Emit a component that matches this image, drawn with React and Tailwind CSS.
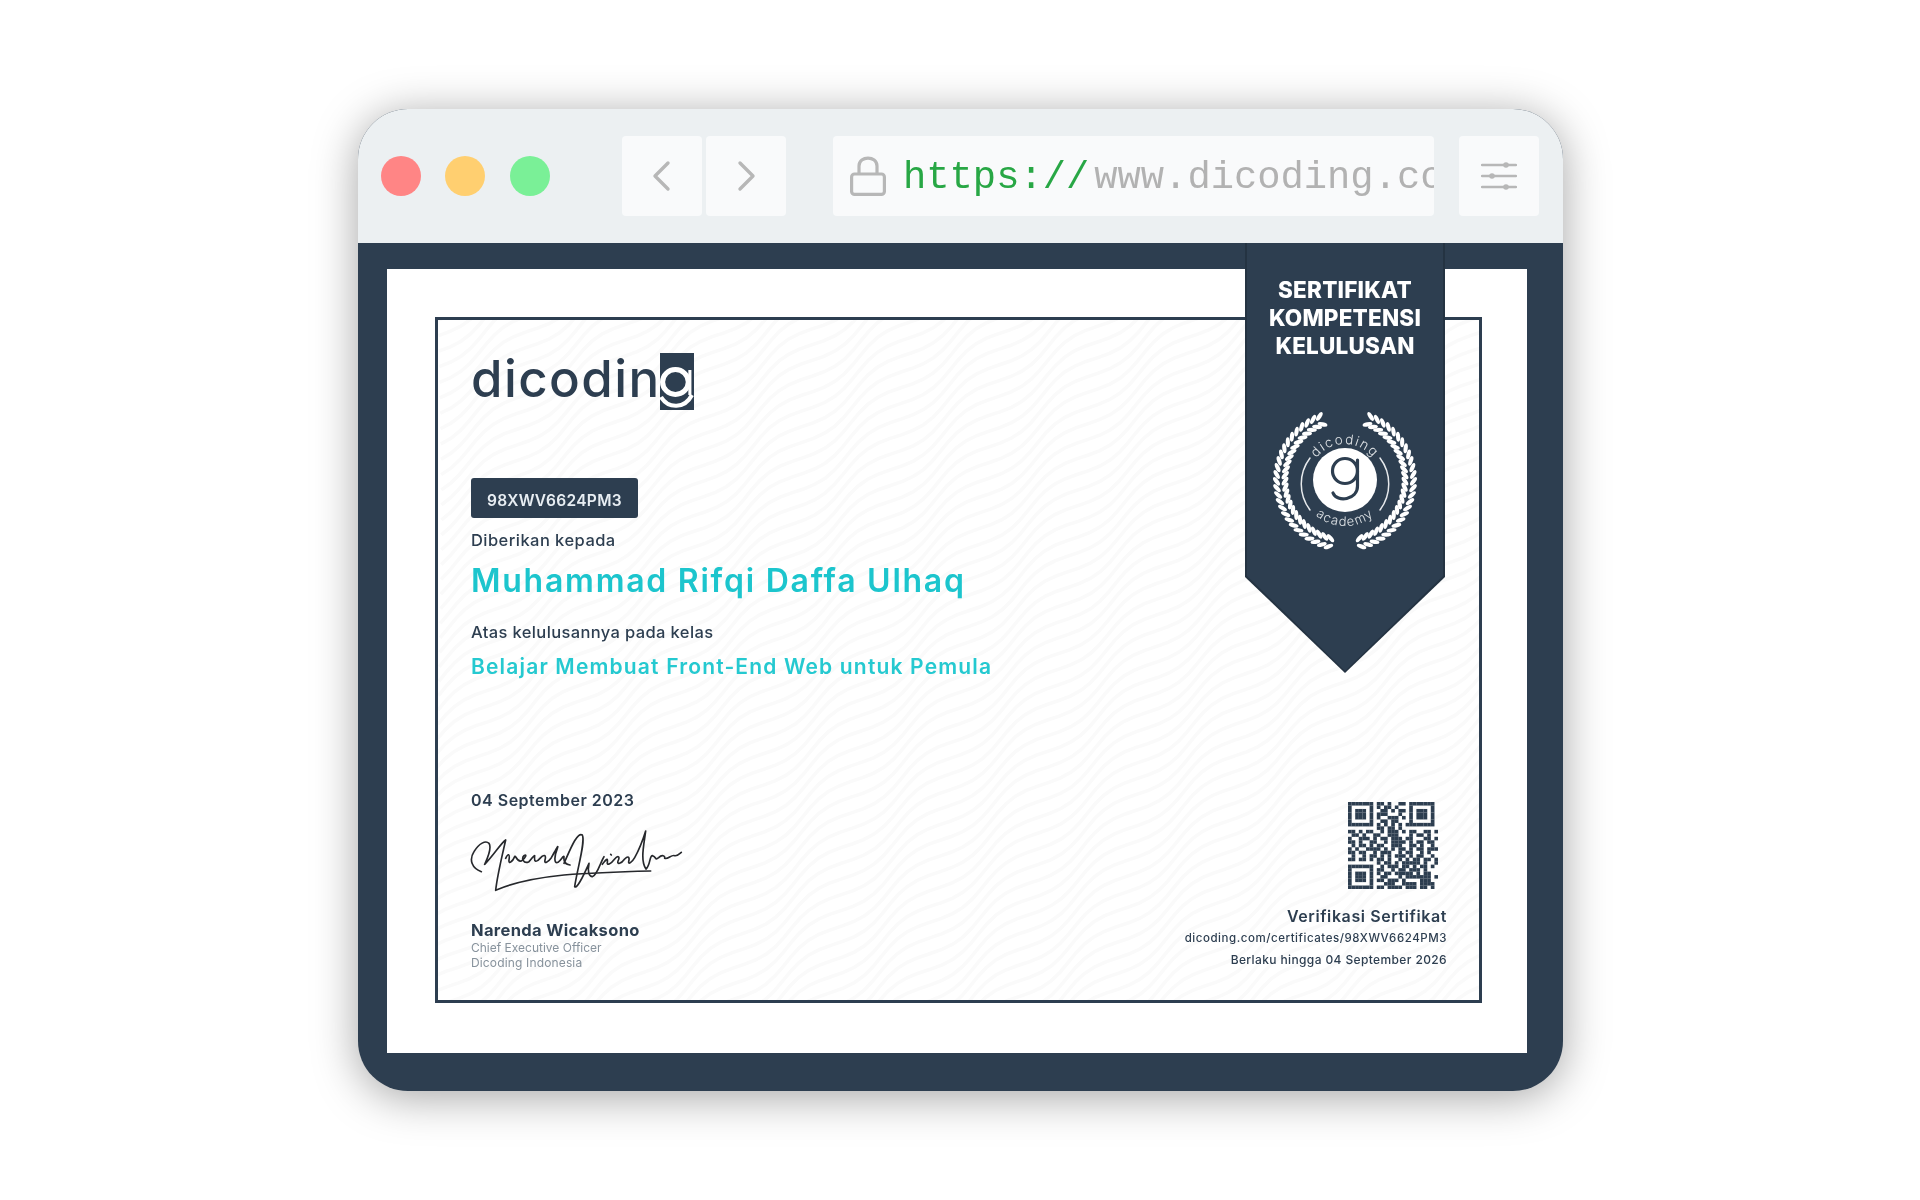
import React from "react";

const DARK = "#2d3e50";

const qrRows = [
  "XXXXXXX.XX.X..XX.XXXXXXX.",
  "X.....X.X.XX.X...X.....X.",
  "X.XXX.X..XX.X.XX.X.XXX.X.",
  "X.XXX.X.XXX...X..X.XXX.X.",
  "X.XXX.X.X..XXX.X.X.XXX.X.",
  "X.....X..XX.XX...X.....X.",
  "XXXXXXX.X.X.X.X.XXXXXXXX.",
  "........XX.XX.X..........",
  "XX.X.XX..X.XXX.X.XX..XX.X",
  ".XX.X..XX..XXX...X.XX.X..",
  "X..XXX.X.XX.XXX.XX...XX.X",
  "XX.X..XX..X.XXXX.X.XX.XX.",
  ".X.XX.X.XX..XXX..XX.X..X.",
  "X.X..XXXX.X.X.XX.X.XX.XXX",
  "XX.XX..X.XXX..X.XX..X.X..",
  ".X..X.XX.X.X.XXX.X.XX..X.",
  "XX.XX.X.XX.X..X.X.XX.XX.X",
  "........X.XX.X.XXXXX.X..X",
  "XXXXXXX..X.XXX.XX.X.XX.X.",
  "X.....X.XX..X.XX.XXX.X...",
  "X.XXX.X.X.XX.XXXXX.X.XX..",
  "X.XXX.X..XX...X.XXXXXXX.X",
  "X.XXX.X.XX.XXX.X....XXX..",
  "X.....X...XXX..XXXX.XXXX.",
  "XXXXXXX.XX.XXXX.XXX.XX.X.",
];

function Qr() {
  return (
    <svg width="90" height="87" viewBox="0 0 25 25" preserveAspectRatio="none" className="block">
      {qrRows.map((row, y) =>
        row.split("").map((c, x) =>
          c === "X" ? <rect key={x + "-" + y} x={x} y={y} width="1.02" height="1.02" fill={DARK} /> : null
        )
      )}
    </svg>
  );
}

function wavePaths() {
  const out = [];
  const dx = 0.82;
  const dy = -0.57;
  for (let k = -30; k < 120; k++) {
    const oy = k * 15;
    let d = "";
    for (let t = 0; t <= 1400; t += 12) {
      const w = 6 * Math.sin(t / 20 + k * 0.12);
      const x = dx * t + 0.57 * w;
      const y = oy + dy * t + 0.82 * w;
      d += (t === 0 ? "M" : "L") + x.toFixed(1) + " " + y.toFixed(1) + " ";
    }
    out.push(d);
  }
  return out;
}

function Pattern() {
  return (
    <svg className="absolute inset-0 w-full h-full" viewBox="0 0 1041 680" preserveAspectRatio="none">
      {wavePaths().map((d, i) => (
        <path key={i} d={d} fill="none" stroke="#fafafa" strokeWidth="3.5" />
      ))}
    </svg>
  );
}

function Signature() {
  return (
    <svg width="225" height="75" viewBox="0 0 675 225" className="block -ml-[7px] -mt-[5px] -mb-[8px]">
      <g fill="none" stroke="#26282c" strokeWidth="5" strokeLinecap="round" strokeLinejoin="round">
        <path d="M52 140 C24 130 14 105 30 80 C45 55 65 45 75 55 C85 70 68 105 62 118 C90 90 110 55 125 45 C115 90 100 150 95 196 C130 180 200 160 300 150 C400 142 480 140 560 138" />
        <path d="M125 100 C132 85 138 85 135 105 C133 118 145 112 152 95 C155 88 158 112 172 108 C185 100 190 85 180 92 C172 100 178 118 195 110 C205 100 208 92 212 92 C210 110 215 115 228 100 C238 88 248 88 243 105 C240 118 252 112 262 98 C275 75 285 55 280 70 C272 90 268 118 282 112 C292 105 298 90 300 95 C298 110 305 118 318 120" />
        <path d="M300 115 C320 70 340 20 355 30 C365 50 340 130 332 185 C338 192 355 160 375 115 C370 140 375 155 385 155 C400 150 410 110 420 95" />
        <path d="M415 118 C425 105 432 95 430 112 C428 122 440 118 452 102 C460 92 470 92 462 108 C458 120 472 116 482 102 C492 92 498 95 494 110 C492 120 504 112 512 98 C525 75 535 50 545 18 C540 60 528 105 546 132 C560 120 556 90 566 92 C578 96 572 108 584 98 C594 88 604 92 602 100 C612 104 622 88 632 92 C640 94 645 88 652 82" />
        <path d="M440 88 L442 90" />
      </g>
    </svg>
  );
}

function LaurelSide({ mirror }) {
  const leaves = [];
  const n = 26;
  for (let i = 0; i < n; i++) {
    const phi = ((22 + (i * (166 - 22)) / (n - 1)) * Math.PI) / 180;
    [60, 68.5].forEach((r, j) => {
      const x = 80 - r * Math.sin(phi);
      const y = 72 - r * Math.cos(phi);
      const tangent = (-phi * 180) / Math.PI;
      const rot = tangent + (j === 0 ? 35 : -35) + 180;
      leaves.push(
        <ellipse key={i + "-" + j} cx={x} cy={y} rx="5" ry="2.1" fill="#fff" transform={`rotate(${rot} ${x} ${y})`} />
      );
    });
  }
  return <g transform={mirror ? "translate(160 0) scale(-1 1)" : undefined}>{leaves}</g>;
}

function Badge() {
  return (
    <svg width="160" height="150" viewBox="0 0 160 150" className="block">
      <defs>
        <path id="arcTop" d="M44 72 A36 36 0 0 1 116 72" />
        <path id="arcBottom" d="M34 72 A46 46 0 0 0 126 72" />
      </defs>
      <LaurelSide />
      <LaurelSide mirror />
      <path d="M45 50 A43 43 0 0 0 45 102" fill="none" stroke="#e6e9ec" strokeWidth="1.5" strokeLinecap="round" />
      <path d="M115 50 A43 43 0 0 1 115 102" fill="none" stroke="#e6e9ec" strokeWidth="1.5" strokeLinecap="round" />
      <circle cx="80" cy="72" r="32" fill="#fff" />
      <circle cx="80" cy="63" r="12.5" fill="none" stroke={DARK} strokeWidth="3.2" />
      <path d="M92.5 52 V78 C92.5 92 72 95 68 85" fill="none" stroke={DARK} strokeWidth="3.2" strokeLinecap="round" />
      <text fontFamily="Inter, sans-serif" fontSize="13.5" fontWeight="300" fill="#dfe3e6" letterSpacing="1.5">
        <textPath href="#arcTop" startOffset="50%" textAnchor="middle">dicoding</textPath>
      </text>
      <text fontFamily="Inter, sans-serif" fontSize="13" fontWeight="300" fill="#dfe3e6" letterSpacing="1.2">
        <textPath href="#arcBottom" startOffset="50%" textAnchor="middle">academy</textPath>
      </text>
    </svg>
  );
}

function Logo() {
  return (
    <div className="flex h-[57px] items-start">
      <span className="font-['Inter',sans-serif] text-[51px] leading-[52px] font-medium tracking-[1.4px] text-[#2d3e50]">dicodin</span>
      <svg width="34" height="57" viewBox="0 0 33 57" preserveAspectRatio="none" className="block shrink-0">
        <rect width="33" height="57" fill={DARK} />
        <circle cx="15" cy="29" r="12.5" fill={DARK} stroke="#fff" strokeWidth="5" />
        <path d="M29 17 V42" stroke="#fff" strokeWidth="3" />
        <path d="M1 44 C8 56 24 56 31 42" fill="none" stroke="#fff" strokeWidth="4" />
      </svg>
    </div>
  );
}

function Chevron({ dir }) {
  return (
    <svg width="22" height="32" viewBox="0 0 22 32" fill="none" stroke="#b7b7b7" strokeWidth="3.4" strokeLinecap="round" strokeLinejoin="round">
      {dir === "left" ? <path d="M17 3 L4 16 L17 29" /> : <path d="M5 3 L18 16 L5 29" />}
    </svg>
  );
}

function Lock() {
  return (
    <svg width="36" height="40" viewBox="0 0 36 40" fill="none" stroke="#b7b7b7" strokeWidth="3.2" className="shrink-0">
      <rect x="1.6" y="18" width="32.8" height="20.4" rx="3" />
      <path d="M9 18 V10 C9 -0.5 27 -0.5 27 10 V18" />
    </svg>
  );
}

function Sliders() {
  return (
    <svg width="36" height="30" viewBox="0 0 36 30" fill="none" stroke="#b7b7b7" strokeWidth="2.4" strokeLinecap="round">
      <path d="M1 4 H35 M1 15 H35 M1 26 H35" />
      <circle cx="25" cy="4" r="2.8" fill="#b7b7b7" stroke="none" />
      <circle cx="11" cy="15" r="2.8" fill="#b7b7b7" stroke="none" />
      <circle cx="25" cy="26" r="2.8" fill="#b7b7b7" stroke="none" />
    </svg>
  );
}

function Toolbar() {
  return (
    <div className="h-[134px] bg-[#ecf0f2] flex items-center pl-[23.5px] shrink-0">
      <div className="flex items-center blur-[0.4px]">
        <span className="w-10 h-10 rounded-full bg-[#ff8585]" />
        <span className="w-10 h-10 rounded-full bg-[#ffcf70] ml-6" />
        <span className="w-10 h-10 rounded-full bg-[#7af097] ml-[25px]" />
        <span className="w-20 h-20 rounded bg-[#f9fafb] ml-[72px] flex items-center justify-center"><Chevron dir="left" /></span>
        <span className="w-20 h-20 rounded bg-[#f9fafb] ml-1 flex items-center justify-center"><Chevron dir="right" /></span>
        <div className="w-[601px] h-20 rounded bg-[#f9fafb] ml-[47px] flex items-center pl-[17px] overflow-hidden">
          <Lock />
          <span className="ml-[17px] pt-[5px] font-['Liberation_Mono',monospace] text-[38.8px] leading-none whitespace-nowrap text-[#28a745]">https://</span>
          <span className="ml-[5px] pt-[5px] font-['Liberation_Mono',monospace] text-[38.8px] leading-none whitespace-nowrap text-[#b2b2b2]">www.dicoding.com/certificates/98XWV6624PM3</span>
        </div>
        <span className="w-20 h-20 rounded bg-[#f9fafb] ml-[25px] flex items-center justify-center"><Sliders /></span>
      </div>
    </div>
  );
}

function Ribbon() {
  return (
    <div className="absolute left-[858px] -top-[26px] w-[200px] h-[430px] bg-[#243342] [clip-path:polygon(0_0,100%_0,100%_334px,50%_430px,0_334px)]">
      <div className="mx-[2px] h-[428px] bg-[#2d3e50] [clip-path:polygon(0_0,100%_0,100%_333px,50%_428px,0_333px)] flex flex-col items-center pt-[33px]">
        <div className="font-['Inter',sans-serif] text-[22.5px] leading-[28px] font-extrabold text-white text-center tracking-[0.2px]">
          <div>SERTIFIKAT</div>
          <div>KOMPETENSI</div>
          <div>KELULUSAN</div>
        </div>
        <div className="mt-[48px]"><Badge /></div>
      </div>
    </div>
  );
}

function Certificate() {
  return (
    <div className="relative bg-white w-[1140px] h-[784px] p-[48px] blur-[0.65px]">
      <div className="relative w-[1047px] h-[686px] border-[3px] border-[#2d3e50] overflow-hidden">
        <Pattern />
        <div className="relative h-full flex flex-col pt-[33px] pl-[33px] pr-[32px] font-['Inter',sans-serif] text-[#2d3e50]">
          <Logo />
          <div className="mt-[68px] w-[167px] h-10 rounded-[3px] bg-[#2d3e50] text-[#e8eef3] flex items-center justify-center text-[15.5px] font-semibold tracking-[0.3px] pt-[6px]">98XWV6624PM3</div>
          <div className="mt-[12px] text-[16.5px] leading-5 font-medium tracking-[0.45px]">Diberikan kepada</div>
          <div className="mt-[11px] text-[32px] leading-10 font-semibold text-[#1cc5cd] tracking-[1.75px]">Muhammad Rifqi Daffa Ulhaq</div>
          <div className="mt-[21px] text-[16.5px] leading-5 font-medium tracking-[0.37px]">Atas kelulusannya pada kelas</div>
          <div className="mt-[10px] text-[21px] leading-[30px] font-semibold text-[#25c9d0] tracking-[1.17px]">Belajar Membuat Front-End Web untuk Pemula</div>
          <div className="mt-[106px] flex justify-between items-end">
            <div>
              <div className="text-[16px] leading-6 font-semibold tracking-[0.5px]">04 September 2023</div>
              <div className="mt-[18px]"><Signature /></div>
              <div className="mt-[28px] text-[16.5px] leading-5 font-bold tracking-[0.35px]">Narenda Wicaksono</div>
              <div className="text-[12px] leading-[15px] text-[#87929c]">Chief Executive Officer</div>
              <div className="text-[12px] leading-[15px] text-[#87929c] tracking-[0.15px]">Dicoding Indonesia</div>
            </div>
            <div className="flex flex-col items-end pb-[2.5px]">
              <div className="mr-[9px]"><Qr /></div>
              <div className="mt-[17px] text-[16px] leading-5 font-semibold tracking-[0.6px]">Verifikasi Sertifikat</div>
              <div className="mt-1 text-[11.5px] leading-4 font-medium tracking-[0.55px]">dicoding.com/certificates/98XWV6624PM3</div>
              <div className="mt-[6px] text-[12px] leading-4 font-medium tracking-[0.38px]">Berlaku hingga 04 September 2026</div>
            </div>
          </div>
        </div>
      </div>
      <Ribbon />
    </div>
  );
}

export default function App() {
  return (
    <div className="w-full h-[1200px] bg-white flex items-center justify-center">
      <div className="w-[1205px] h-[982px] rounded-[50px] overflow-hidden flex flex-col shadow-[0_6px_45px_rgba(0,0,0,0.36)] bg-[#2d3e50]">
        <Toolbar />
        <div className="flex-1 pt-[26px] pl-[29.5px]">
          <Certificate />
        </div>
      </div>
    </div>
  );
}
